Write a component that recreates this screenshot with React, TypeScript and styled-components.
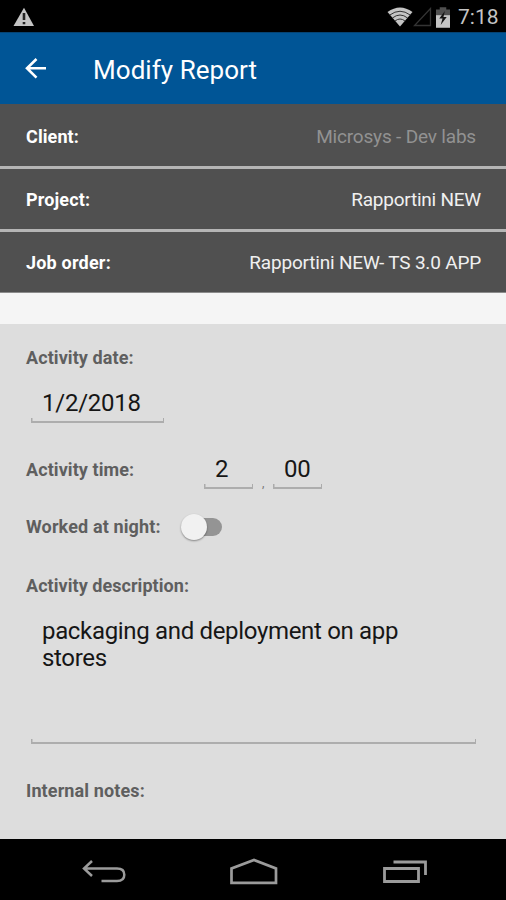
import React from "react";
import styled, { createGlobalStyle } from "styled-components";

const GlobalStyle = createGlobalStyle`
  * { box-sizing: border-box; }
  body { margin: 0; background: #000; font-family: Roboto, "Noto Sans", sans-serif; }
`;

const Screen = styled.div`
  width: 506px;
  height: 900px;
  display: flex;
  flex-direction: column;
  overflow: hidden;
  background: #f5f5f5;
`;

const StatusBar = styled.div`
  height: 32px;
  flex: none;
  display: flex;
  align-items: center;
  justify-content: space-between;
  background: #000;
  color: #c4c4c4;
  padding: 2px 7px 0 13px;
`;

const StatusIcons = styled.div`
  display: flex;
  align-items: center;
`;

const Clock = styled.span`
  margin-left: 8px;
  font-size: 21px;
  line-height: 28px;
  width: 41px;
  white-space: nowrap;
`;

const AppBar = styled.header`
  height: 72px;
  flex: none;
  display: flex;
  align-items: center;
  background: #005596;
  border-top: 1px solid #064372;
  padding-left: 24px;
  color: #fff;
`;

const Title = styled.h1`
  margin: 2px 0 0 45px;
  font-size: 26px;
  line-height: 32px;
  font-weight: 400;
  letter-spacing: 0.05px;
`;

const InfoRow = styled.div<{ $h: number; $top: number; $last?: boolean }>`
  height: ${(p) => p.$h}px;
  flex: none;
  display: flex;
  align-items: flex-start;
  justify-content: space-between;
  padding: ${(p) => p.$top}px 25px 0 26px;
  background: #505050;
  border-bottom: ${(p) => (p.$last ? "1px solid #8b8b8b" : "3px solid #b5b5b5")};
`;

const InfoLabel = styled.span<{ $spacing: number }>`
  color: #fff;
  font-size: 18px;
  line-height: 24px;
  font-weight: 700;
  letter-spacing: ${(p) => p.$spacing}px;
`;

const InfoValue = styled.span<{ $muted?: boolean; $spacing: number }>`
  color: ${(p) => (p.$muted ? "#929292" : "#f0f0f0")};
  font-size: 19px;
  line-height: 24px;
  margin-right: ${(p) => (p.$muted ? 5 : 0)}px;
  letter-spacing: ${(p) => p.$spacing}px;
`;

const Form = styled.main`
  margin-top: 31px;
  flex: 1;
  min-height: 0;
  display: flex;
  flex-direction: column;
  align-items: flex-start;
  background: #ddd;
  padding: 22px 26px 0;
`;

const Label = styled.span<{ $spacing: number }>`
  font-size: 18px;
  line-height: 24px;
  font-weight: 700;
  color: #5f5f5f;
  white-space: nowrap;
  letter-spacing: ${(p) => p.$spacing}px;
`;

const Field = styled.div<{ $w: number; $h: number; $spacing: number }>`
  width: ${(p) => p.$w}px;
  height: ${(p) => p.$h}px;
  flex: none;
  padding-left: 11px;
  font-size: 24px;
  line-height: 27px;
  letter-spacing: ${(p) => p.$spacing}px;
  color: #161616;
  white-space: pre-line;
  border-bottom: 2px solid #adadad;
  background:
    linear-gradient(#ababab, #ababab) left bottom / 1.5px 3px no-repeat,
    linear-gradient(#ababab, #ababab) right bottom / 1.5px 3px no-repeat;
`;

const DateWrap = styled.div`
  margin: 20px 0 0 5px;
`;

const TimeRow = styled.div`
  display: flex;
  align-items: flex-start;
  margin-top: 33px;
  height: 33px;
`;

const TimeLabel = styled.div`
  width: 178px;
  padding-top: 2px;
`;

const Separator = styled.span`
  width: 20px;
  padding-left: 9px;
  align-self: flex-end;
  margin-bottom: 1px;
  font-size: 12px;
  line-height: 10px;
  color: #777;
`;

const NightRow = styled.div`
  display: flex;
  align-items: center;
  margin-top: 24px;
  height: 28px;
`;

const NightLabel = styled.div`
  width: 155px;
  margin-top: -1px;
`;

const Switch = styled.div`
  width: 41px;
  height: 18px;
  display: flex;
  align-items: center;
  margin-top: -1px;
  background: linear-gradient(#949494, #949494) right / 28px 18px no-repeat;
  border-radius: 9px;
`;

const Knob = styled.div`
  width: 26px;
  height: 26px;
  flex: none;
  border-radius: 50%;
  background: #f1f1f1;
  box-shadow: 0 1px 2px rgba(0, 0, 0, 0.4);
`;

const DescriptionLabel = styled.div`
  margin-top: 33px;
  height: 24px;
  display: flex;
`;

const DescriptionWrap = styled.div`
  margin: 20px 0 0 5px;
`;

const NotesLabel = styled.div`
  margin-top: 35px;
  display: flex;
`;

const NavBar = styled.nav`
  height: 61px;
  flex: none;
  display: flex;
  align-items: center;
  justify-content: space-between;
  background: #000;
  padding: 4px 77px 0 81px;
`;

const WarningIcon = () => (
  <svg width="22" height="20" viewBox="0 0 22 20">
    <path d="M11 .8 21 19H.5Z" fill="#c4c4c4" />
    <path d="M11 6v7M11 15v2.2" stroke="#222" strokeWidth="2.6" />
  </svg>
);

const WifiIcon = () => (
  <svg width="26" height="20" viewBox="0 0 26 20">
    <path d="M.5 5Q13-4 25.5 5L13 19.5Z" fill="#c4c4c4" />
    <g fill="none" stroke="#333" strokeWidth="1">
      <path d="M2.800 8Q13 .5 23.200 8" />
      <path d="M5.400 11Q13 5 20.600 11" />
      <path d="M8 14Q13 10 18 14" />
    </g>
  </svg>
);

const SignalIcon = () => (
  <svg width="19" height="20" viewBox="0 0 19 20">
    <path d="M17.500 1.500v17H1.500Z" fill="none" stroke="#343434" strokeWidth="1.300" />
  </svg>
);

const BatterySvg = styled.svg`
  margin-left: 4px;
`;

const BatteryIcon = () => (
  <BatterySvg width="14" height="21" viewBox="0 0 15 22">
    <path d="M4 0h7v2.500h4V9H0V2.500h4Z" fill="#505050" />
    <path d="M0 8.500h15V22H0Z" fill="#c4c4c4" />
    <path d="M9.500 4 3.500 12h3.500l-2 7 6.500-8.500H8Z" fill="#161616" />
  </BatterySvg>
);

const ArrowIcon = () => (
  <svg width="24" height="24" viewBox="0 0 24 24">
    <path d="M12.500 2 3 11.300l9.500 9.300M3 11.300H22" fill="none" stroke="#fff" strokeWidth="2.600" />
  </svg>
);

const BackIcon = () => (
  <svg width="46" height="26" viewBox="0 0 46 26">
    <path
      d="M11 2 3 9.500l8 7.500M3 9.500h33c4.500 0 7.300 2.200 7.300 6.200s-2.800 6.300-7.300 6.300H20.500"
      fill="none"
      stroke="#9b9b9b"
      strokeWidth="2.500"
    />
  </svg>
);

const HomeIcon = () => (
  <svg width="50" height="28" viewBox="0 0 50 28">
    <path d="M2.500 24.800V10.500L25 2 47 10.500v14.300Z" fill="none" stroke="#9b9b9b" strokeWidth="2.700" />
  </svg>
);

const RecentsIcon = () => (
  <svg width="48" height="26" viewBox="0 0 48 26">
    <path d="M3.500 9.500h34v13h-34Z M12.500 3h32v13" fill="none" stroke="#9b9b9b" strokeWidth="2.800" />
  </svg>
);

export default function App() {
  return (
    <Screen>
      <GlobalStyle />
      <StatusBar>
        <WarningIcon />
        <StatusIcons>
          <WifiIcon />
          <SignalIcon />
          <BatteryIcon />
          <Clock>7:18</Clock>
        </StatusIcons>
      </StatusBar>
      <AppBar>
        <ArrowIcon />
        <Title>Modify Report</Title>
      </AppBar>
      <InfoRow $h={65} $top={21}>
        <InfoLabel $spacing={0.1}>Client:</InfoLabel>
        <InfoValue $muted $spacing={-0.18}>Microsys - Dev labs</InfoValue>
      </InfoRow>
      <InfoRow $h={63} $top={19}>
        <InfoLabel $spacing={0.15}>Project:</InfoLabel>
        <InfoValue $spacing={-0.23}>Rapportini NEW</InfoValue>
      </InfoRow>
      <InfoRow $h={61} $top={19} $last>
        <InfoLabel $spacing={0.2}>Job order:</InfoLabel>
        <InfoValue $spacing={-0.19}>Rapportini NEW- TS 3.0 APP</InfoValue>
      </InfoRow>
      <Form>
        <Label $spacing={0.08}>Activity date:</Label>
        <DateWrap>
          <Field $w={133} $h={33} $spacing={-0.25}>1/2/2018</Field>
        </DateWrap>
        <TimeRow>
          <TimeLabel>
            <Label $spacing={0.08}>Activity time:</Label>
          </TimeLabel>
          <Field $w={49} $h={33} $spacing={0}>2</Field>
          <Separator>,</Separator>
          <Field $w={49} $h={33} $spacing={-0.3}>00</Field>
        </TimeRow>
        <NightRow>
          <NightLabel>
            <Label $spacing={0.13}>Worked at night:</Label>
          </NightLabel>
          <Switch>
            <Knob />
          </Switch>
        </NightRow>
        <DescriptionLabel>
          <Label $spacing={0.05}>Activity description:</Label>
        </DescriptionLabel>
        <DescriptionWrap>
          <Field $w={445} $h={126} $spacing={-0.33}>{"packaging and deployment on app\nstores"}</Field>
        </DescriptionWrap>
        <NotesLabel>
          <Label $spacing={0.12}>Internal notes:</Label>
        </NotesLabel>
      </Form>
      <NavBar>
        <BackIcon />
        <HomeIcon />
        <RecentsIcon />
      </NavBar>
    </Screen>
  );
}
